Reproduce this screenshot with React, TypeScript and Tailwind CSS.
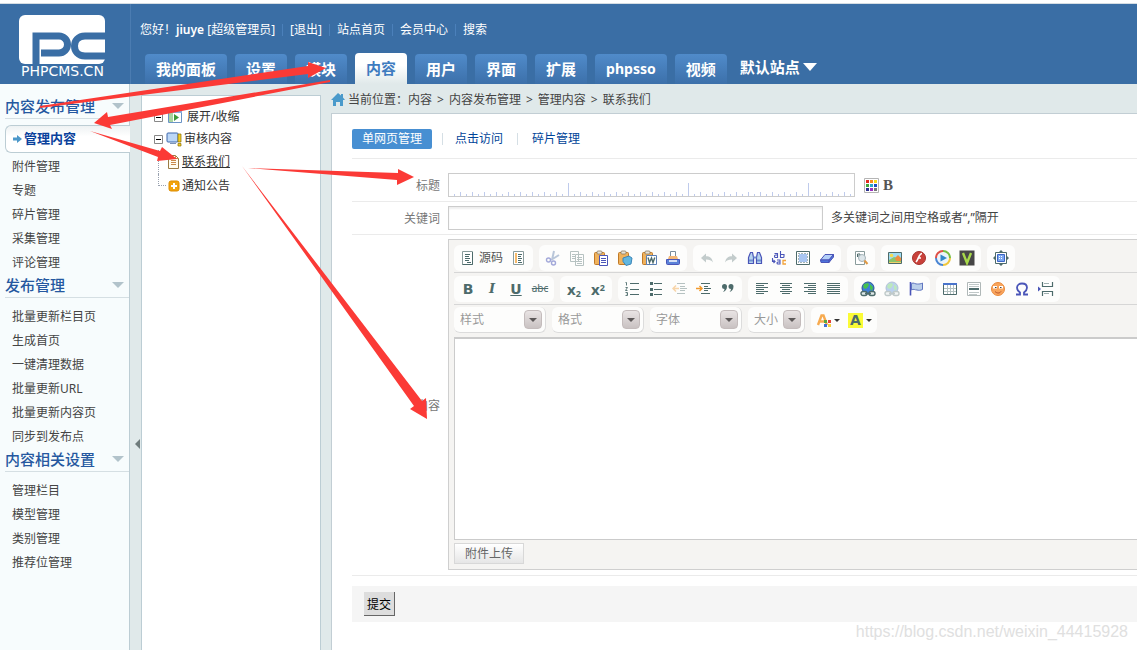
import React from 'react';
import clsx from 'clsx';

const TOP_TABS = ['我的面板', '设置', '模块', '内容', '用户', '界面', '扩展', 'phpsso', '视频'];

const MENU = [
  {
    title: '内容发布管理',
    active: '管理内容',
    items: ['附件管理', '专题', '碎片管理', '采集管理', '评论管理'],
  },
  {
    title: '发布管理',
    items: ['批量更新栏目页', '生成首页', '一键清理数据', '批量更新URL', '批量更新内容页', '同步到发布点'],
  },
  {
    title: '内容相关设置',
    items: ['管理栏目', '模型管理', '类别管理', '推荐位管理'],
  },
];

const CRUMBS = ['内容', '内容发布管理', '管理内容', '联系我们'];

const INK = '#4d6b6b';
const BLUE = '#4a55b8';

const clipboard = (
  <>
    <rect x="1.5" y="2.5" width="10" height="12" rx="1" fill="#f0b25c" stroke="#c07a28" />
    <rect x="4" y="1" width="5" height="3" rx="1" fill="#e9e4d8" stroke="#8a7a60" strokeWidth=".8" />
  </>
);

const globe = (
  <>
    <circle cx="8" cy="7" r="6" fill="#3f7fd6" stroke="#2b5694" />
    <path d="M4 3l4-1 1 2-2 3-2 1-2-2zM10 3l3 3-1 4-2-2z" fill="#46c24d" />
    <path d="M1 12.5a2 2 0 0 1 2-2h2a2 2 0 0 1 2 2 2 2 0 0 1-2 2H3a2 2 0 0 1-2-2zM9 12.5a2 2 0 0 1 2-2h2a2 2 0 0 1 2 2 2 2 0 0 1-2 2h-2a2 2 0 0 1-2-2zM5 12.5h6" fill="#dfe8e8" stroke={INK} strokeWidth="1.4" />
  </>
);

const lines = (rows: number[][], color = INK) => (
  <path d={rows.map(([x, y, w]) => `M${x} ${y}.5h${w}`).join('')} stroke={color} fill="none" />
);

const ICONS: Record<string, React.ReactNode> = {
  源码: (
    <>
      <path d="M2.5 1.5h10v13h-10z" fill="#fff" stroke="#8a9c9c" />
      <path d="M12.5 2v12.5h-10" stroke={INK} fill="none" />
      {lines([[5, 4, 5], [5, 6, 4], [5, 8, 5], [5, 10, 4], [7, 12, 4]])}
    </>
  ),
  模板: (
    <>
      <path d="M2.5 1.5h10v13h-10z" fill="#fff" stroke="#8a9c9c" />
      <path d="M5 3v10" stroke="#f2a33a" strokeWidth="1.5" />
      {lines([[7, 4, 4], [7, 6, 3], [7, 8, 4], [7, 10, 3], [7, 12, 4]])}
    </>
  ),
  剪切: (
    <g opacity=".5" fill="none">
      <path d="M9 1L7 10M14 5L6 10" stroke="#7791b8" strokeWidth="2" />
      <circle cx="3.5" cy="10" r="2" stroke={BLUE} strokeWidth="1.4" />
      <circle cx="8.5" cy="13" r="2" stroke={BLUE} strokeWidth="1.4" />
    </g>
  ),
  复制: (
    <g opacity=".4">
      <path d="M1.5 1.5h8v10h-8zM6.5 4.5h8v11h-8z" fill="#fff" stroke={INK} />
      {lines([[3, 4, 3], [3, 6, 3], [3, 8, 3], [8, 7, 5], [8, 9, 5], [8, 11, 5], [8, 13, 5]])}
    </g>
  ),
  粘贴: (
    <>
      {clipboard}
      <path d="M6.5 5.5h8v10h-8z" fill="#fff" stroke={BLUE} />
      {lines([[8, 8, 5], [8, 10, 5], [8, 12, 5]], BLUE)}
    </>
  ),
  粘贴为无格式文本: (
    <>
      {clipboard}
      <path d="M6 8l6-2 3 2-1 6-5 1.5-3-4z" fill="#62b7e0" stroke="#3c86b8" />
    </>
  ),
  从Word粘贴: (
    <>
      {clipboard}
      <path d="M5.5 5.5h10v9h-10z" fill="#fff" stroke="#5a7fb5" />
      <path d="M7 7.5l1.5 5 2-4.5 1.5 4.5 1.8-5" fill="none" stroke={INK} strokeWidth="1.4" />
    </>
  ),
  打印: (
    <>
      <path d="M5.5 1.5h5v6h-5z" fill="#fff" stroke="#7a8c9c" />
      <path d="M3 9l1-3h8l1 3v1H3z" fill="#f3b676" />
      <path d="M1.5 9.5h13v4a1 1 0 0 1-1 1h-11a1 1 0 0 1-1-1z" fill="#5b82d8" stroke={BLUE} />
      <path d="M4 11h8" stroke="#fff" strokeWidth="1.5" />
    </>
  ),
  撤销: <path d="M2 8l5-4.500v2.800c4 0 6 1.700 7 6.200-1.700-2.200-3.500-3-7-3v3z" fill="#c3cccc" />,
  重做: <path d="M14 8L9 3.500v2.800c-4 0-6 1.700-7 6.200 1.700-2.200 3.500-3 7-3v3z" fill="#c3cccc" />,
  查找: (
    <>
      <path d="M3.5 2.5h2l1 5v6h-5v-6zM10.500 2.500h2l2 5v6h-5v-6z" fill="#b7d4ef" stroke={BLUE} strokeWidth="1.2" />
      <path d="M6.500 7.500h3M2 10.500h4M10 10.500h4" stroke="#6f8fd0" strokeWidth="2" />
    </>
  ),
  替换: (
    <>
      <path
        d="M3.500 3.500H6.500V7.500H4.500a1 1 0 0 1-1-1v-.5a1 1 0 0 1 1-1H6.500M9.500 1v6.500h2.500a1 1 0 0 0 1-1v-2H9.500M6 10H9v4H7a1 1 0 0 1-1-1 1 1 0 0 1 1-1H9M1.500 8v3.500H4M2.500 10l1.500 1.500L2.500 13"
        fill="none"
        stroke={BLUE}
        strokeWidth="1.1"
      />
      <path d="M15 10.500h-3V14h3" fill="none" stroke="#f2a33a" strokeWidth="1.300" />
    </>
  ),
  全选: (
    <>
      <path d="M1.5 1.5h13v13h-13z" fill="#fff" stroke={INK} />
      <path d="M4 4h8v8H4z" fill="#a9c6f2" />
      <path d="M3.5 3.5h9v9h-9z" fill="none" stroke={INK} strokeDasharray="1 2" />
    </>
  ),
  清除格式: (
    <>
      <path d="M6 4.5h8.5L10 10H1.5z" fill="#b4d0f8" stroke={BLUE} />
      <path d="M1.5 10H10v2.5H2zM10 10l4.5-5.5V7L10 12.500z" fill="#4d74dc" stroke={BLUE} />
    </>
  ),
  预览: (
    <>
      <path d="M2.5 1.5h9v13h-9z" fill="#fff" stroke="#8a9c9c" />
      <path d="M4.500 7V4h2.500v2h-2.500" fill="none" stroke={INK} />
      <circle cx="9" cy="8" r="3.500" fill="#dde6ea" stroke="#a5b3b8" />
      <path d="M11.500 10.500l3 3.500" stroke="#e09a45" strokeWidth="2" />
    </>
  ),
  图像: (
    <>
      <path d="M1.5 2.5h13v11h-13z" fill="#9fdcf5" stroke={INK} />
      <path d="M2 10l5-3 7 2v4H2z" fill="#8cc56a" />
      <circle cx="4.500" cy="5.500" r="1.800" fill="#f6dc4d" />
      <path d="M8 8l3-3 3 3v3H9z" fill="#ee8c40" />
      <path d="M2 12.500h12" stroke="#f1d26b" />
    </>
  ),
  Flash: (
    <>
      <circle cx="8" cy="8" r="6.500" fill="#c9413a" stroke="#a5332d" />
      <path d="M11 3.500c-3 0-3 5-6 8.500M6.500 8H10" stroke="#fff" strokeWidth="1.600" fill="none" />
    </>
  ),
  视频: (
    <>
      <circle cx="8" cy="8" r="5.500" fill="#eaf4fb" />
      <path d="M8 1a7 7 0 0 1 7 7" stroke="#77bf45" strokeWidth="2" fill="none" />
      <path d="M15 8a7 7 0 0 1-7 7" stroke="#efc73c" strokeWidth="2" fill="none" />
      <path d="M8 15a7 7 0 0 1-7-7" stroke="#4a86d4" strokeWidth="2" fill="none" />
      <path d="M1 8a7 7 0 0 1 7-7" stroke="#de5148" strokeWidth="2" fill="none" />
      <path d="M5.500 4.500L12 8l-6.500 3.500z" fill="#3388c9" />
    </>
  ),
  视频库: (
    <>
      <path d="M.5.500h15v15H.5z" fill="#474747" />
      <path d="M4 3l4 10 4-10" stroke="#a7d94a" strokeWidth="2.400" fill="none" />
    </>
  ),
  最大化: (
    <>
      <path d="M8 0l2.500 2.500h-5zM8 16l2.500-2.500h-5zM0 8l2.500-2.500v5zM16 8l-2.500-2.500v5z" fill={INK} />
      <path d="M2.500 2.500h11v11h-11z" fill="#fff" stroke={INK} />
      <path d="M4.500 4.500h7v7h-7z" fill="#7ca8f0" stroke="#3c65c4" />
      <path d="M6 6.500h4M6 8.500h4" stroke="#fff" strokeDasharray="1 1" />
    </>
  ),
  编号列表: (
    <>
      {lines([[6, 2, 9], [6, 8, 9], [6, 13, 9]])}
      <path
        d="M1.500 1.500h1v3M1.500 6.500h2l-2 3h2M1.500 11.500h2v1.500h-1M3.500 13v1.500h-2"
        fill="none"
        stroke={INK}
        strokeWidth=".9"
      />
    </>
  ),
  项目列表: (
    <>
      {lines([[6, 2, 8], [6, 8, 8], [6, 13, 8]])}
      <path d="M2 1h3v3H2zM2 7h3v3H2zM2 12h3v3H2z" fill={INK} />
    </>
  ),
  减少缩进: (
    <g opacity=".4">
      {lines([[5, 2, 8], [8, 5, 5], [8, 7, 7], [8, 9, 5], [5, 12, 8]])}
      <path d="M7 7.500H1M4 4.500l-3 3 3 3" stroke="#f29a2e" strokeWidth="1.500" fill="none" />
    </g>
  ),
  增加缩进: (
    <>
      {lines([[5, 2, 9], [8, 5, 4], [8, 7, 7], [8, 9, 4], [5, 12, 9]])}
      <path d="M0 7.500h6M3.500 5l2.500 2.500L3.500 10" stroke="#f29a2e" strokeWidth="1.500" fill="none" />
    </>
  ),
  引用: (
    <path
      d="M2 5.500a2.500 2.500 0 1 1 5 0c0 3-1.500 4.500-4 5.500 1-1 1.500-2 1.500-3A2.500 2.500 0 0 1 2 5.500zM8.500 5.500a2.500 2.500 0 1 1 5 0c0 3-1.500 4.500-4 5.500 1-1 1.500-2 1.500-3a2.500 2.500 0 0 1-2.500-2.500z"
      fill={INK}
    />
  ),
  左对齐: lines([[2, 2, 12], [2, 4, 8], [2, 6, 12], [2, 8, 8], [2, 10, 12], [2, 12, 8]]),
  居中: lines([[2, 2, 12], [4, 4, 8], [2, 6, 12], [4, 8, 8], [2, 10, 12], [4, 12, 8]]),
  右对齐: lines([[2, 2, 12], [6, 4, 8], [2, 6, 12], [6, 8, 8], [2, 10, 12], [6, 12, 8]]),
  两端对齐: lines([[1, 2, 13], [1, 4, 13], [1, 6, 13], [1, 8, 13], [1, 10, 13], [1, 12, 13]]),
  插入链接: globe,
  取消链接: <g opacity=".35">{globe}</g>,
  锚点: (
    <>
      <path d="M2.500 1v13.500" stroke={BLUE} strokeWidth="1.600" />
      <path d="M3.500 2.500c2-1.500 4 1 6 .5 2 0 3 0 5-1v6.500c-2 1-4 1-5.500.5-2 0-3.500-1.500-5.500 0z" fill="#bcd0ea" stroke="#6076c0" />
    </>
  ),
  表格: (
    <>
      <path d="M1.500 2.500h13v11h-13z" fill="#fff" stroke={INK} />
      <path d="M1 3h14" stroke="#4a74cc" strokeWidth="2" />
      <path d="M2 7.500h12M2 10.500h12M5.500 4v9M8.500 4v9M11.500 4v9" stroke="#b4c2c2" />
    </>
  ),
  水平线: (
    <>
      <path d="M1.500 1.500h13v13h-13z" fill="#fff" stroke="#b0b8b8" />
      {lines([[3, 3, 10], [3, 5, 10], [3, 11, 10], [3, 13, 8]], '#c0c8c8')}
      <path d="M3 8h10" stroke={INK} strokeWidth="2" />
    </>
  ),
  表情: (
    <>
      <circle cx="8" cy="8" r="6.500" fill="#f9a55c" stroke="#ea8a3c" />
      <path d="M3 5h4v2.500H3zM9 5h4v2.500H9z" fill="#fff" />
      <path d="M5 6.500h1.500M10 6.500h1.500" stroke="#444" />
      <path d="M5 10.500c2 2 4.500 2 6 0" stroke="#b5502a" fill="none" />
    </>
  ),
  特殊符号: (
    <path
      d="M2 13.500h4v-2C4 10 3 8.500 3 6.800 3 4 5.200 2.500 8 2.500S13 4 13 6.800c0 1.700-1 3.200-3 4.700v2h4"
      fill="none"
      stroke={BLUE}
      strokeWidth="1.800"
    />
  ),
  分页符: (
    <>
      <path d="M4.500 1v4.500h10V1M4.500 15v-4.500h10V15" fill="#fff" stroke={INK} strokeWidth="1.200" />
      <path d="M6 2.500h5M6 12.500h5" stroke="#9fb0b0" />
      <path d="M0 5.500L3 8l-3 2.500z" fill={BLUE} />
    </>
  ),
};

function ToolButton({ name, children }: { name: string; children?: React.ReactNode }) {
  return (
    <button type="button" title={name} className="flex h-6 w-6 items-center justify-center text-[#4d6b6b]">
      {children ?? (
        <svg viewBox="0 0 16 16" className="size-4" aria-hidden="true">
          {ICONS[name]}
        </svg>
      )}
    </button>
  );
}

function ToolGroup({ names, children }: { names?: string[]; children?: React.ReactNode }) {
  return (
    <div className="flex h-[26px] shrink-0 items-center rounded-md bg-white/80 px-0.5">
      {children}
      {names?.map((name) => (
        <ToolButton key={name} name={name} />
      ))}
    </div>
  );
}

function Combo({ label, narrow }: { label: string; narrow?: boolean }) {
  return (
    <div
      className={clsx(
        'relative h-[26px] shrink-0 rounded-md border-r border-b border-[#dcdcdc] bg-white/80',
        narrow ? 'w-[57px]' : 'w-[92px]',
      )}
    >
      <select aria-label={label} className="size-full appearance-none pl-1.5 text-xs text-[#999] outline-none">
        <option>{label}</option>
      </select>
      <span className="pointer-events-none absolute top-[3px] right-[3px] flex h-[19px] w-[18px] items-center justify-center rounded-sm border border-[#c4bcbc] bg-linear-to-b from-[#e9e4e4] to-[#c9c2c2]">
        <svg viewBox="0 0 8 4" className="h-1 w-2" aria-hidden="true">
          <path d="M0 0h8L4 4z" fill="#5c5858" />
        </svg>
      </span>
    </div>
  );
}

function Caret() {
  return (
    <svg viewBox="0 0 6 3" className="h-[3px] w-1.5" aria-hidden="true">
      <path d="M0 0h6L3 3z" fill="#333" />
    </svg>
  );
}

function Editor() {
  return (
    <div className="flex flex-1 flex-col border border-r-0 border-[#cfcfcf] bg-[#f5f4f2] py-[5px] pl-[5px]">
      <div className="flex h-7 gap-1.5 border-b border-[#d6d6d6]">
        <ToolGroup>
          <button type="button" className="flex h-6 w-[51px] items-center gap-[3px] pl-1 text-xs text-[#555]">
            <svg viewBox="0 0 16 16" className="size-4 shrink-0" aria-hidden="true">
              {ICONS['源码']}
            </svg>
            <span className="whitespace-nowrap">源码</span>
          </button>
          <ToolButton name="模板" />
        </ToolGroup>
        <ToolGroup names={['剪切', '复制', '粘贴', '粘贴为无格式文本', '从Word粘贴', '打印']} />
        <ToolGroup names={['撤销', '重做', '查找', '替换', '全选', '清除格式']} />
        <ToolGroup names={['预览']} />
        <ToolGroup names={['图像', 'Flash', '视频', '视频库']} />
        <ToolGroup names={['最大化']} />
      </div>
      <div className="mt-[3px] flex h-[29px] gap-1.5 border-b border-[#d6d6d6]">
        <ToolGroup>
          <ToolButton name="加粗">
            <b className="font-['DejaVu_Sans'] text-[14px]">B</b>
          </ToolButton>
          <ToolButton name="倾斜">
            <i className="font-['DejaVu_Serif'] text-[13px] font-bold">I</i>
          </ToolButton>
          <ToolButton name="下划线">
            <u className="font-['DejaVu_Sans'] text-[14px] font-bold">U</u>
          </ToolButton>
          <ToolButton name="删除线">
            <s className="text-[10px]">abc</s>
          </ToolButton>
        </ToolGroup>
        <ToolGroup>
          <ToolButton name="下标">
            <b className="text-[15px] leading-4">
              x<sub className="text-[9px]">2</sub>
            </b>
          </ToolButton>
          <ToolButton name="上标">
            <b className="text-[15px] leading-4">
              x<sup className="text-[9px]">2</sup>
            </b>
          </ToolButton>
        </ToolGroup>
        <ToolGroup names={['编号列表', '项目列表', '减少缩进', '增加缩进', '引用']} />
        <ToolGroup names={['左对齐', '居中', '右对齐', '两端对齐']} />
        <ToolGroup names={['插入链接', '取消链接', '锚点']} />
        <ToolGroup names={['表格', '水平线', '表情', '特殊符号', '分页符']} />
      </div>
      <div className="mt-0.5 flex h-[30px] gap-1.5">
        <Combo label="样式" />
        <Combo label="格式" />
        <Combo label="字体" />
        <Combo label="大小" narrow />
        <div className="flex h-[26px] shrink-0 items-center gap-2 rounded-md bg-white/80 px-[5px]">
          <button type="button" title="文本颜色" className="flex items-center gap-0.5">
            <svg viewBox="0 0 16 16" className="size-4" aria-hidden="true">
              <path d="M2 13L5.500 3.500h2L11 13M4 9.500h5" fill="none" stroke="#f7ab50" strokeWidth="2.400" />
              <path d="M8 8h3v3H8z" fill="#5aa83c" />
              <path d="M12 8h3v3h-3z" fill="#e0433a" />
              <path d="M8 12h3v3H8z" fill="#3f6fd8" />
              <path d="M12 12h3v3h-3z" fill="#f5cf3e" />
            </svg>
            <Caret />
          </button>
          <button type="button" title="背景颜色" className="flex items-center gap-[3px]">
            <span className="flex size-[15px] items-center justify-center bg-[#fbfb36] font-['DejaVu_Sans'] text-[14px] leading-none font-bold text-[#4d6b6b]">
              A
            </span>
            <Caret />
          </button>
        </div>
      </div>
      <textarea
        id="content"
        className="h-[203px] w-full resize-none border border-t-2 border-r-0 border-[#cbcbcb] bg-white outline-none"
      />
      <div className="pt-[3px]">
        <button
          type="button"
          className="h-[21px] w-[70px] border border-[#d8d8d8] bg-linear-to-b from-white to-[#e6e6e6] text-xs leading-none text-[#666]"
        >
          附件上传
        </button>
      </div>
    </div>
  );
}

function Logo() {
  return (
    <a href="#" className="flex w-[130px] shrink-0 flex-col items-start pt-[11px] pl-[19px] text-white">
      <svg viewBox="0 0 86 49" className="h-[49px] w-[86px]" aria-label="PC">
        <rect width="86" height="49" rx="6" fill="#fff" />
        <path d="M17 49V21h23a8 8 0 0 1 0 17H22" fill="none" stroke="#3a6ea5" strokeWidth="7" />
        <path d="M86 21H66c-14 0-14 20 0 20h20" fill="none" stroke="#3a6ea5" strokeWidth="7" />
      </svg>
      <span className="pl-0.5 font-['DejaVu_Sans'] text-[14px] leading-[14px]">PHPCMS.CN</span>
    </a>
  );
}

function Divider() {
  return <i className="mx-[7px] h-3 w-px bg-[#4b80ba]" />;
}

function Header() {
  return (
    <header className="mt-[3px] flex h-[81px] border-t border-[#d5dde3] bg-[#3a6ea5]">
      <Logo />
      <div className="flex flex-1 flex-col justify-between border-l border-[#4b7cb1] pt-4">
        <div className="flex h-5 items-center pl-[9px] text-xs whitespace-nowrap text-white">
          <span>
            您好！<span className="font-semibold">jiuye</span> [超级管理员]
          </span>
          <Divider />
          <a href="#">[退出]</a>
          <Divider />
          <a href="#">站点首页</a>
          <Divider />
          <a href="#">会员中心</a>
          <Divider />
          <a href="#">搜索</a>
        </div>
        <nav className="flex items-end gap-2 pl-[14px] text-[15px] font-bold whitespace-nowrap">
          {TOP_TABS.map((tab) => (
            <a
              key={tab}
              href="#"
              className={clsx(
                'flex items-center rounded-t px-[11px]',
                tab === 'phpsso' && 'text-sm',
                tab === '内容'
                  ? 'h-[31px] bg-linear-to-b from-white from-40% to-[#e0e9ea] text-[#3f7cc0]'
                  : 'h-[30px] bg-linear-to-b from-[#508bca] to-[#3c70aa] text-white',
              )}
            >
              {tab}
            </a>
          ))}
          <button type="button" className="mb-[5px] ml-[5px] flex h-6 items-center gap-[3px] text-white">
            默认站点
            <svg viewBox="0 0 14 8" className="h-2 w-3.5" aria-hidden="true">
              <path d="M0 0h14L7 8z" fill="#fff" />
            </svg>
          </button>
        </nav>
      </div>
    </header>
  );
}

function Sidebar() {
  return (
    <aside className="w-[130px] shrink-0 border-r border-[#bccdd4] bg-[#f7fcfd] pt-[11px] pl-[5px] text-xs text-[#444]">
      {MENU.map((section) => (
        <section key={section.title}>
          <h3 className="flex h-6 items-center justify-between border-b border-[#d5dfe3] pr-[5px] pb-0.5 text-[15px] font-medium whitespace-nowrap text-[#2558a0]">
            {section.title}
            <svg viewBox="0 0 12 6" className="h-1.5 w-3" aria-hidden="true">
              <path d="M0 0h12L6 6z" fill="#b2c3cb" />
            </svg>
          </h3>
          <ul className="pt-1.5">
            {section.active && (
              <li className="-mr-px mb-px flex h-7 items-center gap-0.5 rounded-l-md border border-r-0 border-[#bccdd4] bg-linear-to-b from-[#eef2f3] to-white to-40% pl-[7px]">
                <svg viewBox="0 0 9 8" className="h-2 w-[9px]" aria-hidden="true">
                  <path d="M0 2.500h4V0l5 4-5 4V5.500H0z" fill="#4b97c9" />
                </svg>
                <a href="#" className="text-[13px] font-bold text-[#0a419c]">
                  {section.active}
                </a>
              </li>
            )}
            {section.items.map((item) => (
              <li key={item} className="flex h-6 items-center pt-0.5 pl-[7px]">
                <a href="#">{item}</a>
              </li>
            ))}
          </ul>
        </section>
      ))}
    </aside>
  );
}

function TreeToggle() {
  return (
    <svg viewBox="0 0 9 9" className="size-[9px]" aria-hidden="true">
      <path d="M.5.500h8v8h-8z" fill="#fff" stroke="#888" />
      <path d="M2 4.500h5" stroke="#000" />
    </svg>
  );
}

function Tree() {
  return (
    <div className="w-[180px] shrink-0 border border-b-0 border-[#bccdd4] bg-white pt-[10px] text-xs text-[#333]">
      <ul className="ml-3 whitespace-nowrap">
        <li className="flex h-[22px] items-center">
          <TreeToggle />
          <svg viewBox="0 0 16 16" className="mr-1 ml-1 size-4" aria-hidden="true">
            <path d="M1.500 2.500h13v11h-13z" fill="#fff" stroke="#6a93c6" />
            <path d="M2 3h4v10H2z" fill="#a9d5a0" />
            <path d="M1 3h14" stroke="#8ab0de" strokeWidth="2" />
            <path d="M7 5l5 3.500L7 12z" fill="#3f9b3a" />
          </svg>
          展开/收缩
        </li>
        <li className="flex h-[22px] items-center">
          <TreeToggle />
          <svg viewBox="0 0 16 16" className="mr-0.5 ml-[3px] size-4" aria-hidden="true">
            <rect x="1" y="2" width="11" height="9" rx="1" fill="#bcd7f7" stroke="#3f68ad" />
            <path d="M4 12.500h6" stroke="#7c93b8" />
            <path d="M12 3h3v8h-3zM12 12.500h3V15h-3z" fill="#f2ce23" stroke="#8c6f00" strokeWidth=".7" />
          </svg>
          审核内容
        </li>
        <li className="ml-1 flex h-6 items-center border-l border-dotted border-gray-400">
          <svg viewBox="0 0 16 16" className="ml-[7px] size-4" aria-hidden="true">
            <path d="M2.500 1.500h7l3 3v10h-10z" fill="#fffdf0" stroke="#9a7b45" />
            <path d="M9.500 1.500v3h3M5 6.500h5M5 8.500h5M5 10.500h5" fill="none" stroke="#c98a4b" />
          </svg>
          <a href="#" className="underline">
            联系我们
          </a>
        </li>
        <li className="ml-1 flex h-6 items-center">
          <i className="mb-3 h-3 w-2 border-b border-l border-dotted border-gray-400" />
          <svg viewBox="0 0 16 16" className="size-4" aria-hidden="true">
            <rect x="3" y="3" width="10" height="10" rx="2" fill="#f2a40e" stroke="#dd8d00" />
            <path d="M8 5v6M5 8h6" stroke="#fff" strokeWidth="2" />
          </svg>
          <a href="#">通知公告</a>
        </li>
      </ul>
    </div>
  );
}

// ruler marks under the title field, one every 6px
function Ruler() {
  return (
    <svg className="pointer-events-none absolute inset-0 size-full" aria-hidden="true">
      {Array.from({ length: 67 }, (_, i) => {
        const h = i % 20 === 19 ? 13 : i % 2 ? 4 : 2;
        return <rect key={i} x={6 + i * 6} y={23 - h} width="1" height={h} fill="#bfcbec" />;
      })}
    </svg>
  );
}

function Swatches() {
  const colors = ['#e02b20', '#f58a1f', '#f5dd1f', '#3ea83a', '#2aa7c9', '#1d4fc4', '#2c2f8f', '#9a2fc0', '#777'];
  return (
    <svg viewBox="0 0 15 15" className="size-[15px]" aria-hidden="true">
      <path d="M.5.500h14v14H.5z" fill="#fff" stroke="#b5b5b5" />
      {colors.map((c, i) => (
        <rect key={c} x={2 + (i % 3) * 4} y={2 + Math.floor(i / 3) * 4} width="3" height="3" fill={c} />
      ))}
    </svg>
  );
}

function Main() {
  return (
    <main className="flex min-w-0 flex-1 flex-col">
      <div className="flex h-[29px] items-center gap-[5px] pt-0.5 text-xs whitespace-nowrap text-[#444]">
        <svg viewBox="0 0 14 13" className="-mr-0.5 h-[13px] w-3.5" aria-hidden="true">
          <path d="M7 0l3 2.500V1h2v3.500L14 7h-2v6H9V9H5v4H2V7H0z" fill="#4a9acb" />
        </svg>
        <span className="-mr-[5px]">当前位置：</span>
        {CRUMBS.map((crumb, i) => (
          <React.Fragment key={crumb}>
            {i > 0 && <span>&gt;</span>}
            <span>{crumb}</span>
          </React.Fragment>
        ))}
      </div>
      <div className="flex-1 border-t border-l border-[#c2ced4] bg-white pl-5">
        <div className="flex h-[45px] items-center border-b border-[#ebebeb] pt-[5px] text-xs whitespace-nowrap text-[#049]">
          <a href="#" className="rounded-xs bg-[#478fd2] px-[10px] leading-5 text-white">
            单网页管理
          </a>
          <i className="mr-3 ml-[10px] h-3 w-px bg-[#d5dfe5]" />
          <a href="#">点击访问</a>
          <i className="mr-[14px] ml-[14px] h-3 w-px bg-[#d5dfe5]" />
          <a href="#">碎片管理</a>
        </div>
        <form className="text-xs text-[#777]">
          <div className="flex items-center border-b border-[#ebebeb] pt-[14px] pb-1">
            <label htmlFor="title" className="w-24 shrink-0 pt-0.5 pr-2 text-right">
              标题
            </label>
            <div className="relative h-6 w-[407px]">
              <input id="title" className="size-full border border-[#ccc] px-1 outline-none" />
              <Ruler />
            </div>
            <button type="button" title="标题颜色" className="ml-[9px]">
              <Swatches />
            </button>
            <button
              type="button"
              title="标题加粗"
              className="ml-1 font-['Liberation_Serif'] text-[15px] leading-none font-bold text-[#555]"
            >
              B
            </button>
          </div>
          <div className="flex items-center border-b border-[#ebebeb] py-1">
            <label htmlFor="keywords" className="w-24 shrink-0 pt-0.5 pr-2 text-right">
              关键词
            </label>
            <input
              id="keywords"
              className="h-6 w-[375px] border border-[#ccc] px-1 shadow-[inset_0_2px_2px_#eee] outline-none"
            />
            <span className="ml-2 whitespace-nowrap text-[#444]">多关键词之间用空格或者“,”隔开</span>
          </div>
          <div className="flex items-center border-b border-[#ebebeb] pt-1 pb-[5px]">
            <label htmlFor="content" className="w-24 shrink-0 pt-0.5 pr-2 text-right">
              内容
            </label>
            <Editor />
          </div>
          <div className="mt-[10px] bg-[#f5f5f5] px-3 py-1.5">
            <button
              type="submit"
              className="h-6 w-[31px] border-r border-b border-[#666] bg-[#ddd] pt-0.5 text-xs whitespace-nowrap text-black"
            >
              提交
            </button>
          </div>
        </form>
      </div>
    </main>
  );
}

function GuideArrows() {
  return (
    <svg className="pointer-events-none absolute top-0 left-0 h-[430px] w-[430px]" viewBox="0 0 430 430" aria-hidden="true">
      <g fill="#fb3a36">
        <path d="M40 106L308 66V62L326 68L308 78V74L40 108Z" />
        <path d="M330 80L108 117L107 112L94 123L112 129L110 125L330 82Z" />
        <path d="M90 131L160 151L162 147L177 159L157 161L158 157Z" />
        <path d="M248 168L398 173V169L414 177L397 185V180Z" />
        <path d="M242 166L422 401L426 398L427 419L410 409L414 406Z" />
      </g>
    </svg>
  );
}

export default function App() {
  return (
    <div className="relative flex min-h-screen flex-col overflow-hidden bg-white font-['Noto_Sans','Noto_Sans_CJK_SC',sans-serif]">
      <Header />
      <div className="flex flex-1 bg-[#e0e9ea]">
        <Sidebar />
        <button type="button" aria-label="收起菜单" className="flex w-[11px] shrink-0 justify-end pt-[355px] pr-px">
          <svg viewBox="0 0 5 10" className="h-[10px] w-[5px]" aria-hidden="true">
            <path d="M5 0v10L0 5z" fill="#6f7c7c" />
          </svg>
        </button>
        <div className="flex shrink-0 pt-[11px] pr-[10px]">
          <Tree />
        </div>
        <Main />
      </div>
      <GuideArrows />
      <span className="absolute right-[9px] bottom-2 font-['Liberation_Sans'] text-base leading-5 text-[#e0e0e0]">
        https://blog.csdn.net/weixin_44415928
      </span>
    </div>
  );
}
